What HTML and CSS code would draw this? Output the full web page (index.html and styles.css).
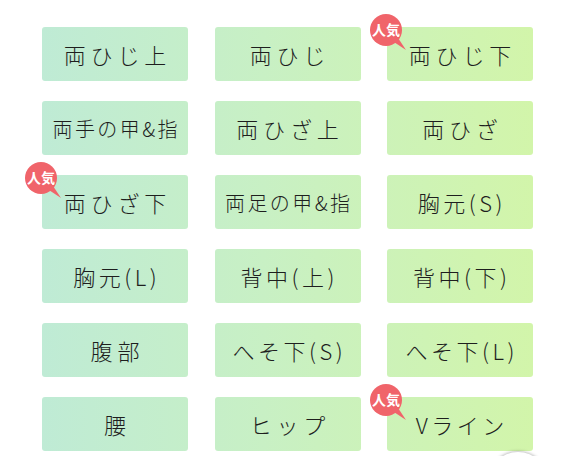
FILE: index.html
```html
<!DOCTYPE html>
<html lang="ja">
<head>
    <meta charset="UTF-8">
    <meta name="viewport" content="width=device-width, initial-scale=1.0">
    <title>部位選択</title>
    <link rel="stylesheet" href="styles.css">
</head>
<body>
    <div class="parts">
        <a class="part col1">両ひじ上</a>
        <a class="part col2">両ひじ</a>
        <a class="part col3"><span class="badge">人気</span>両ひじ下</a>

        <a class="part col1 long">両手の甲&amp;指</a>
        <a class="part col2">両ひざ上</a>
        <a class="part col3">両ひざ</a>

        <a class="part col1"><span class="badge">人気</span>両ひざ下</a>
        <a class="part col2 long">両足の甲&amp;指</a>
        <a class="part col3 mid">胸元(S)</a>

        <a class="part col1 mid">胸元(L)</a>
        <a class="part col2 mid">背中(上)</a>
        <a class="part col3 mid">背中(下)</a>

        <a class="part col1">腹部</a>
        <a class="part col2 mid">へそ下(S)</a>
        <a class="part col3 mid">へそ下(L)</a>

        <a class="part col1">腰</a>
        <a class="part col2">ヒップ</a>
        <a class="part col3 mid"><span class="badge">人気</span>Vライン</a>
    </div>
    <div class="float-btn"></div>
</body>
</html>
```

FILE: styles.css
```css
html, body {
    overflow: hidden;
}

body {
    margin: 0;
    background: #fff;
    font-family: "Noto Sans CJK JP", "Noto Sans", sans-serif;
    font-weight: 300;
    color: #1e1e1e;
}

.parts {
    display: grid;
    grid-template-columns: repeat(3, 146px);
    grid-auto-rows: 54px;
    column-gap: 26.5px;
    row-gap: 20px;
    padding: 27px 0 0 42px;
}

.part {
    position: relative;
    display: flex;
    align-items: center;
    justify-content: center;
    border-radius: 3px;
    background-image: linear-gradient(90deg, #bfebd5 0%, #c8f0c4 45%, #d2f5aa 100%);
    background-size: 491px 100%;
    font-size: 22px;
    letter-spacing: 0.22em;
    text-indent: 0.22em;
    white-space: nowrap;
    cursor: pointer;
}

.part.col1 { background-position: 0 0; }
.part.col2 { background-position: -172.5px 0; }
.part.col3 { background-position: -345px 0; }

.part.mid {
    letter-spacing: 0.16em;
    text-indent: 0.16em;
}

.part.long {
    font-size: 20px;
    letter-spacing: 0.12em;
    text-indent: 0.12em;
}

.badge {
    position: absolute;
    left: -17px;
    top: -13px;
    width: 32px;
    height: 32px;
    border-radius: 50%;
    background: #f0646a;
    color: #fff;
    font-size: 14px;
    font-weight: bold;
    letter-spacing: 0;
    text-indent: 0;
    line-height: 30px;
    text-align: center;
}

.badge::after {
    content: '';
    position: absolute;
    left: 20px;
    top: 20px;
    width: 16px;
    height: 16px;
    background: #f0646a;
    clip-path: polygon(10% 40%, 100% 100%, 40% 10%);
}

.float-btn {
    position: fixed;
    left: 488px;
    top: 452px;
    width: 60px;
    height: 60px;
    border-radius: 50%;
    background: #fff;
    box-shadow: 0 -1px 3px rgba(0, 0, 0, 0.25);
}
```
